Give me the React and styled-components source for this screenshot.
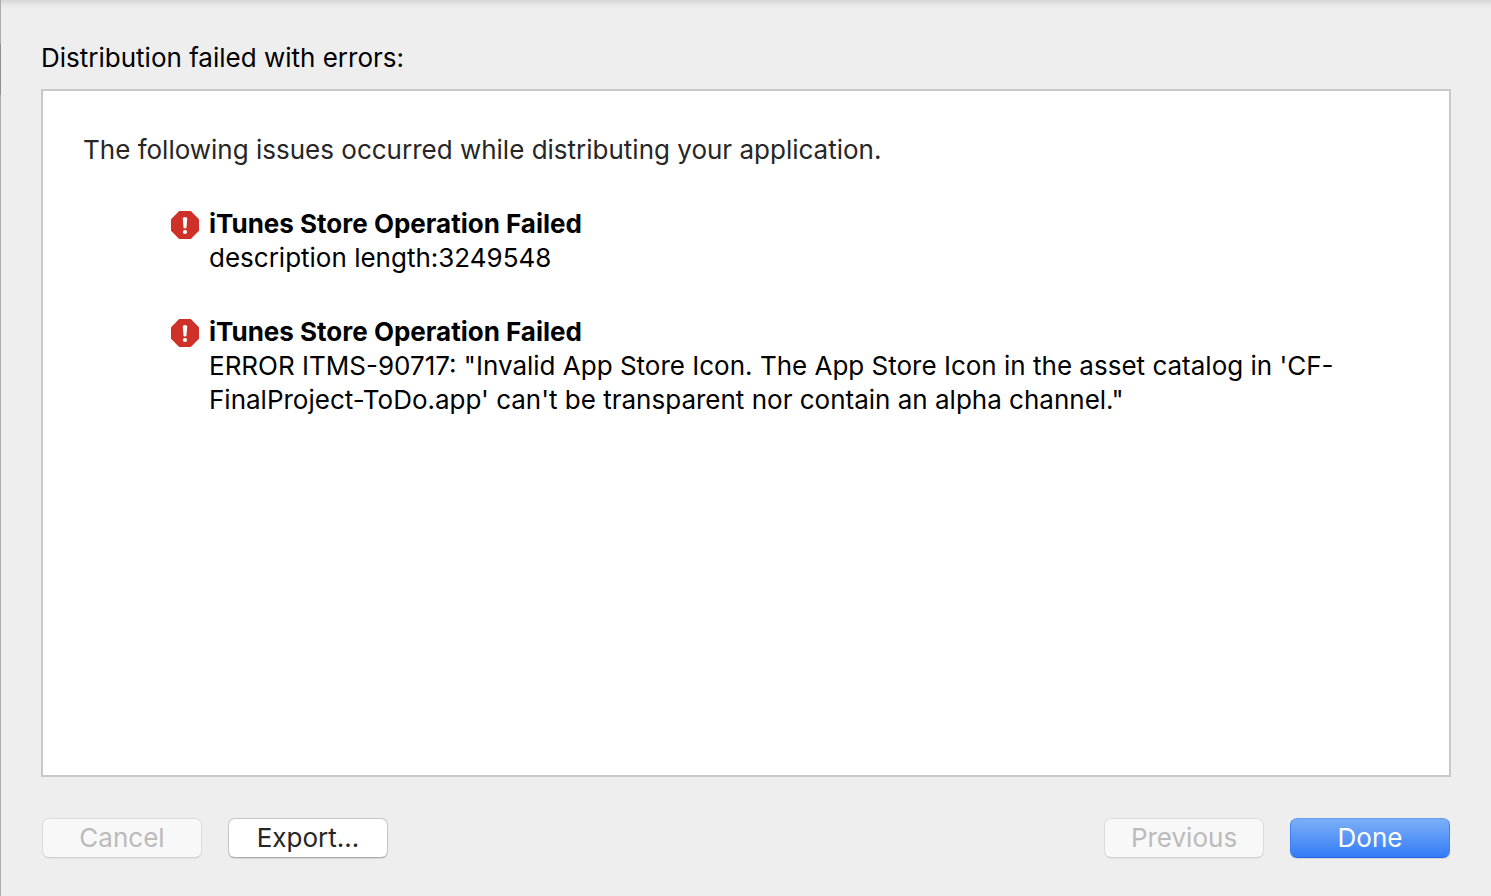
import React from "react";
import styled, { createGlobalStyle, css } from "styled-components";

const GlobalStyle = createGlobalStyle`
  *, *::before, *::after { box-sizing: border-box; }
  body {
    margin: 0;
    background: #eeeeee;
    color: #000;
    font-family: Inter, "Liberation Sans", sans-serif;
    font-size: 26px;
    line-height: 34px;
  }
`;

const Sheet = styled.main`
  display: flex;
  flex-direction: column;
  min-height: 100vh;
  padding: 41px 40px 38px 41px;
  background:
    linear-gradient(#acacac 44px, #8e8e8e 44px 95px, #acacac 95px) left / 1px 100% no-repeat,
    linear-gradient(#d6d6d6, #e4e4e4 4px, #eeeeee 8px);
`;

const Title = styled.h1`
  margin: 0 0 14px;
  font-size: 26px;
  font-weight: 400;
`;

const Panel = styled.section`
  flex: 1;
  padding: 42px 40px;
  border: 2px solid #c8c8c8;
  background: #fff;
`;

const Intro = styled.p`
  margin: 0 0 40px;
  color: #262626;
`;

const IssueList = styled.ul`
  display: grid;
  gap: 40px;
  margin: 0;
  padding: 0 72px 0 88px;
  list-style: none;
`;

const Issue = styled.li`
  display: grid;
  grid-template-columns: 28px 1fr;
  column-gap: 10px;
`;

const IssueIcon = styled.svg`
  width: 28px;
  height: 28px;
  margin-top: 4px;
`;

const IssueTitle = styled.h2`
  margin: 0;
  font-size: 26px;
  font-weight: 700;
`;

const IssueText = styled.p`
  margin: 0;
`;

const Footer = styled.footer`
  display: flex;
  justify-content: space-between;
  margin-top: 41px;
  padding: 0 1px;
`;

const Group = styled.div`
  display: flex;
  gap: 26px;
`;

const Button = styled.button`
  width: 160px;
  height: 40px;
  padding: 0;
  border: 1px solid #c6c6c6;
  border-bottom-color: #acacac;
  border-radius: 7px;
  background: #fff;
  box-shadow: 0 1px 1px rgba(0, 0, 0, 0.1);
  color: #262626;
  font: inherit;

  &:disabled {
    border-color: #dcdcdc;
    border-bottom-color: #d0d0d0;
    background: #f8f8f8;
    box-shadow: 0 1px 1px rgba(0, 0, 0, 0.04);
    color: #bbbbbb;
  }

  ${({ $primary }) => $primary && css`
    border-color: #659ff4 #3f80f5 #2a62e8;
    background: linear-gradient(#7db1f7, #327af8) border-box;
    color: #fff;
  `}
`;

const issues = [
  { title: "iTunes Store Operation Failed", text: "description length:3249548" },
  {
    title: "iTunes Store Operation Failed",
    text: "ERROR ITMS-90717: \"Invalid App Store Icon. The App Store Icon in the asset catalog in 'CF-FinalProject-ToDo.app' can't be transparent nor contain an alpha channel.\"",
  },
];

function ErrorIcon() {
  return (
    <IssueIcon viewBox="0 0 28 28" role="img" aria-label="Error">
      <path fill="#cf3027" d="M8.2 0h11.6L28 8.2v11.6L19.8 28H8.2L0 19.8V8.2z" />
      <path fill="#fff" d="M11.8 7.6Q11.8 6 14 6t2.2 1.6l-.7 9q-.2 1-1.5 1t-1.5-1z" />
      <circle cx="14" cy="21" r="2.1" fill="#fff" />
    </IssueIcon>
  );
}

export default function App() {
  return (
    <>
      <GlobalStyle />
      <Sheet>
        <Title>Distribution failed with errors:</Title>
        <Panel>
          <Intro>The following issues occurred while distributing your application.</Intro>
          <IssueList>
            {issues.map((issue) => (
              <Issue key={issue.text}>
                <ErrorIcon />
                <div>
                  <IssueTitle>{issue.title}</IssueTitle>
                  <IssueText>{issue.text}</IssueText>
                </div>
              </Issue>
            ))}
          </IssueList>
        </Panel>
        <Footer>
          <Group>
            <Button type="button" disabled>Cancel</Button>
            <Button type="button">Export...</Button>
          </Group>
          <Group>
            <Button type="button" disabled>Previous</Button>
            <Button type="button" $primary>Done</Button>
          </Group>
        </Footer>
      </Sheet>
    </>
  );
}
